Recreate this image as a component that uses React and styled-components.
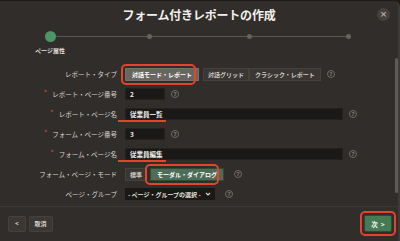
import React from 'react';
import styled, { createGlobalStyle } from 'styled-components';

const GlobalStyle = createGlobalStyle`
  html, body {
    margin: 0;
    padding: 0;
    background: #1e1c1a;
  }
  body {
    font-family: "Noto Sans CJK JP", "Noto Sans", sans-serif;
    color: #e6e3de;
  }
`;

const Dialog = styled.div`
  position: relative;
  box-sizing: border-box;
  width: 400px;
  height: 241px;
  margin-top: 1px;
  background: #302d2a;
  border-right: 2px solid #3d3a37;
  border-top-right-radius: 6px;
  display: flex;
  flex-direction: column;
  overflow: hidden;
`;

const Header = styled.div`
  height: 27px;
  display: flex;
  align-items: center;
  justify-content: center;
  position: relative;
`;

const Title = styled.h1`
  margin: 0;
  font-size: 12px;
  font-weight: 700;
  color: #f2f0ec;
  letter-spacing: -0.2px;
`;

const Close = styled.button`
  position: absolute;
  right: 8px;
  top: 7px;
  width: 13px;
  height: 13px;
  border-radius: 50%;
  border: none;
  background: #45413d;
  color: #cfcac4;
  font-size: 9px;
  line-height: 13px;
  padding: 0;
  text-align: center;
  font-family: "DejaVu Sans", sans-serif;
`;

const Track = styled.div`
  position: relative;
  margin-left: 30px;
  width: 339px;
  height: 35px;
  display: flex;
  justify-content: space-between;
  &::before {
    content: '';
    position: absolute;
    left: 20px;
    right: 20px;
    top: 8px;
    height: 1px;
    background: #5b5753;
  }
`;

const Step = styled.div`
  position: relative;
  width: 40px;
  display: flex;
  flex-direction: column;
  align-items: center;
`;

const Dot = styled.div`
  margin-top: ${p => (p.$active ? '3px' : '6px')};
  width: ${p => (p.$active ? '11px' : '5px')};
  height: ${p => (p.$active ? '11px' : '5px')};
  border-radius: 50%;
  background: ${p => (p.$active ? '#4f9466' : '#66625d')};
`;

const StepLabel = styled.div`
  margin-top: 4px;
  font-size: 6px;
  font-weight: 700;
  color: #e2ded8;
  white-space: nowrap;
`;

const Form = styled.div`
  display: grid;
  grid-template-columns: 117px 1fr;
  grid-auto-rows: 20px;
  column-gap: 8px;
  margin-top: 1px;
`;

const Label = styled.div`
  display: flex;
  align-items: center;
  justify-content: flex-end;
  font-size: 6.5px;
  color: #d9d5cf;
  white-space: nowrap;
`;

const Req = styled.span`
  color: #e0523a;
  font-size: 7px;
  align-self: flex-start;
  margin-top: 3px;
  margin-right: 5px;
`;

const Field = styled.div`
  display: flex;
  align-items: center;
  gap: 6px;
  position: relative;
`;

const Group = styled.div`
  display: flex;
  align-items: center;
  position: relative;
  ${p => p.$ring && `
    &::before {
      content: '';
      position: absolute;
      left: ${p.$ring.left}px;
      width: ${p.$ring.width}px;
      top: -4px;
      bottom: -4px;
      border: 2px solid #e5432b;
      border-radius: 5px;
      box-sizing: border-box;
      pointer-events: none;
    }
  `}
`;

const Seg = styled.div`
  height: 13px;
  box-sizing: border-box;
  padding: 0 ${p => p.$pad || 5}px;
  display: flex;
  align-items: center;
  font-size: 6px;
  font-weight: 700;
  white-space: nowrap;
  border: 1px solid ${p => (p.$on === 'gray' ? '#75726e' : p.$on === 'green' ? '#2f4a37' : '#45423e')};
  background: ${p => (p.$on === 'gray' ? '#696661' : p.$on === 'green' ? '#4d6d56' : '#393633')};
  color: ${p => (p.$on ? '#ffffff' : '#cfcac3')};
  margin-right: ${p => p.$gap || 0}px;
`;

const Input = styled.div`
  box-sizing: border-box;
  width: ${p => p.$w}px;
  height: 12px;
  background: #1a1918;
  border: 1px solid #24221f;
  display: flex;
  align-items: center;
  padding-left: 4px;
  font-size: 6.5px;
  font-weight: 700;
  color: #f1eee9;
`;

const Underline = styled.div`
  position: absolute;
  left: -7px;
  width: 48px;
  bottom: 2px;
  height: 2px;
  background: #e5432b;
`;

const Help = styled.span`
  width: 8px;
  height: 8px;
  box-sizing: border-box;
  border: 1px solid #6f6b66;
  border-radius: 50%;
  color: #7d7873;
  font-size: 5.5px;
  font-weight: 700;
  display: flex;
  align-items: center;
  justify-content: center;
  font-family: "DejaVu Sans", sans-serif;
`;

const Select = styled.div`
  box-sizing: border-box;
  width: 90px;
  height: 12px;
  background: #1a1918;
  display: flex;
  align-items: center;
  justify-content: space-between;
  padding: 0 4px 0 3px;
  font-size: 6px;
  font-weight: 700;
  color: #e6e2dc;
  white-space: nowrap;
`;

const Footer = styled.div`
  margin-top: auto;
  height: 33px;
  border-top: 1px solid #3b3835;
  display: flex;
  align-items: center;
  justify-content: space-between;
  padding: 0 8px;
  margin-bottom: 2px;
`;

const FootLeft = styled.div`
  display: flex;
  gap: 3px;
`;

const FootBtn = styled.div`
  height: 16px;
  box-sizing: border-box;
  padding: 0 ${p => p.$pad}px;
  background: #3a3734;
  border: 1px solid #45423e;
  border-radius: 2px;
  display: flex;
  align-items: center;
  font-size: 6px;
  font-weight: 700;
  color: #d8d3cc;
`;

const NextRing = styled.div`
  border: 2px solid #e5432b;
  border-radius: 5px;
  padding: 2px;
  margin-right: -6px;
`;

const NextBtn = styled.div`
  width: 28px;
  height: 17px;
  box-sizing: border-box;
  background: #457a55;
  border: 1px solid #2c4a35;
  border-radius: 2px;
  display: flex;
  align-items: center;
  justify-content: center;
  gap: 3px;
  font-size: 6.5px;
  font-weight: 700;
  color: #f4f4f0;
`;

const Scroll = styled.div`
  position: absolute;
  right: 0;
  top: 57px;
  width: 3px;
  height: 135px;
  border-radius: 2px;
  background: #5f5b56;
`;

const Chevron = () => (
  <svg width="6" height="4" viewBox="0 0 6 4">
    <path d="M1 1l2 2 2-2" stroke="#d8d3cc" strokeWidth="1.2" fill="none" />
  </svg>
);

const steps = ['ページ属性', '', '', ''];

export default function App() {
  return (
    <>
      <GlobalStyle />
      <Dialog>
        <Header>
          <Title>フォーム付きレポートの作成</Title>
          <Close>×</Close>
        </Header>
        <Track>
          {steps.map((s, i) => (
            <Step key={i}>
              <Dot $active={i === 0} />
              {s && <StepLabel>{s}</StepLabel>}
            </Step>
          ))}
        </Track>
        <Form>
          <Label>レポート・タイプ</Label>
          <Field>
            <Group $ring={{ left: -4, width: 75 }}>
              <Seg $on="gray" $pad={6} $gap={4}>対話モード・レポート</Seg>
              <Seg $pad={4}>対話グリッド</Seg>
              <Seg $pad={5}>クラシック・レポート</Seg>
            </Group>
            <Help>?</Help>
          </Field>

          <Label><Req>*</Req>レポート・ページ番号</Label>
          <Field>
            <Input $w={40}>2</Input>
            <Help>?</Help>
          </Field>

          <Label><Req>*</Req>レポート・ページ名</Label>
          <Field>
            <Input $w={218}>従業員一覧</Input>
            <Help>?</Help>
            <Underline />
          </Field>

          <Label><Req>*</Req>フォーム・ページ番号</Label>
          <Field>
            <Input $w={40}>3</Input>
            <Help>?</Help>
          </Field>

          <Label><Req>*</Req>フォーム・ページ名</Label>
          <Field>
            <Input $w={218}>従業員編集</Input>
            <Help>?</Help>
            <Underline />
          </Field>

          <Label>フォーム・ページ・モード</Label>
          <Field>
            <Group $ring={{ left: 20, width: 74 }}>
              <Seg $pad={4} $gap={3}>標準</Seg>
              <Seg $on="green" $pad={6}>モーダル・ダイアログ</Seg>
            </Group>
            <Help style={{ marginLeft: 4 }}>?</Help>
          </Field>

          <Label>ページ・グループ</Label>
          <Field>
            <Select>
              - ページ・グループの選択 -
              <Chevron />
            </Select>
            <Help style={{ marginLeft: 4 }}>?</Help>
          </Field>
        </Form>
        <Footer>
          <FootLeft>
            <FootBtn $pad={6}>&lt;</FootBtn>
            <FootBtn $pad={5}>取消</FootBtn>
          </FootLeft>
          <NextRing>
            <NextBtn>次<span>&gt;</span></NextBtn>
          </NextRing>
        </Footer>
        <Scroll />
      </Dialog>
    </>
  );
}
